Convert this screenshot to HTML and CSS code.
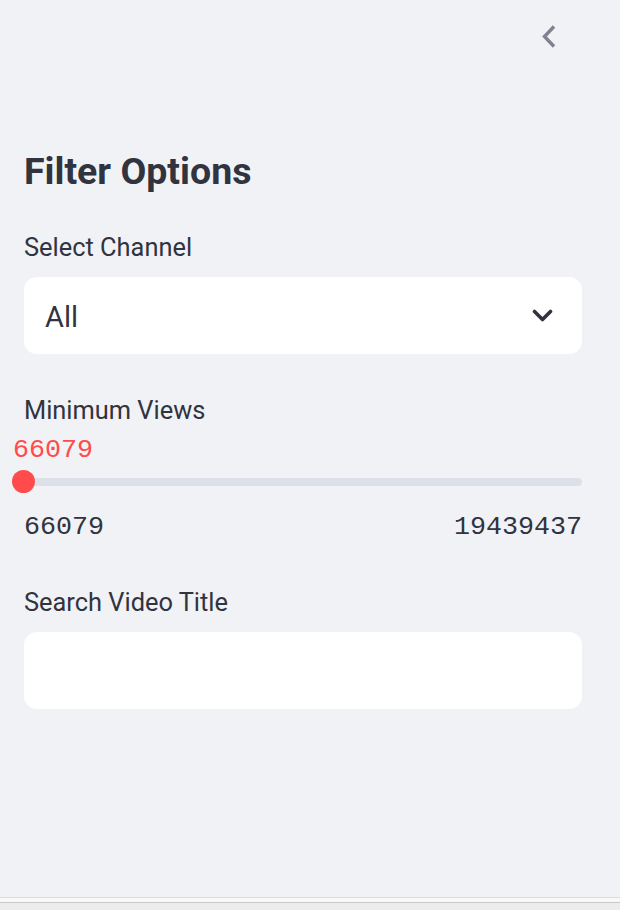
FILE: index.html
```html
<!DOCTYPE html>
<html lang="en">
<head>
<meta charset="utf-8">
<title>Filter Options</title>
<link rel="stylesheet" href="styles.css">
</head>
<body>
<div class="page">
  <aside class="sidebar">
    <div class="topbar">
      <button class="collapse" aria-label="Collapse sidebar">
        <svg width="16" height="25" viewBox="0 0 16 25" aria-hidden="true"><path d="M13 2.5 L3.5 12.5 L13 22.5" fill="none" stroke="#808290" stroke-width="3.4" stroke-linecap="butt" stroke-linejoin="miter"/></svg>
      </button>
    </div>
    <h2 class="heading">Filter Options</h2>

    <div class="widget w-select">
      <div class="label">Select Channel</div>
      <div class="select">
        <span class="select-value">All</span>
        <svg class="select-arrow" width="21" height="14" viewBox="0 0 21 14" aria-hidden="true"><path d="M2.5 2.5 L10.5 10.5 L18.5 2.5" fill="none" stroke="#31333f" stroke-width="3.6" stroke-linecap="round" stroke-linejoin="round"/></svg>
      </div>
    </div>

    <div class="widget w-slider">
      <div class="label">Minimum Views</div>
      <div class="slider-value">66079</div>
      <div class="slider">
        <div class="track"></div>
        <div class="thumb"></div>
      </div>
      <div class="range">
        <span>66079</span>
        <span>19439437</span>
      </div>
    </div>

    <div class="widget w-input">
      <div class="label">Search Video Title</div>
      <div class="input"></div>
    </div>
  </aside>
  <div class="hscroll"></div>
</div>
</body>
</html>
```

FILE: styles.css
```css
html, body {
  margin: 0;
  padding: 0;
}

body {
  background: #f0f2f6;
  font-family: Roboto, "Liberation Sans", sans-serif;
  color: #31333f;
}

.page {
  height: 910px;
  display: flex;
  flex-direction: column;
  overflow: hidden;
}

.sidebar {
  flex: 1;
  background: #f0f2f6;
  padding: 0 38px 0 24px;
  border-bottom: 1px solid #dcdcdf;
}

.topbar {
  height: 48px;
  display: flex;
  justify-content: flex-end;
  align-items: flex-start;
  padding-top: 24px;
  box-sizing: border-box;
  padding-right: 25px;
}

.collapse {
  border: 0;
  background: none;
  padding: 0;
  margin: 0;
  width: 16px;
  height: 25px;
  display: block;
}

.collapse svg {
  display: block;
}

.heading {
  margin: 101px 0 0 0;
  font-size: 37.5px;
  line-height: 44px;
  font-weight: 700;
  letter-spacing: 0;
  color: #31333f;
}

.label {
  font-size: 25.4px;
  line-height: 32px;
  font-weight: 400;
  color: #31333f;
}

.w-select {
  margin-top: 38px;
}

.select {
  margin-top: 14px;
  height: 77px;
  background: #ffffff;
  border-radius: 13px;
  display: flex;
  align-items: center;
  justify-content: space-between;
  padding: 2px 29px 0 21px;
  box-sizing: border-box;
}

.select-value {
  font-size: 29px;
  line-height: 34px;
}

.select-arrow {
  display: block;
  margin-top: -2px;
}

.w-slider {
  margin-top: 40px;
}

.slider-value {
  font-family: "Liberation Mono", "DejaVu Sans Mono", monospace;
  font-size: 26.7px;
  line-height: 30px;
  color: #ff4b4b;
  margin-top: 9px;
  margin-left: -11px;
}

.slider {
  position: relative;
  height: 23px;
  margin-top: 5px;
  display: flex;
  align-items: center;
}

.track {
  flex: 1;
  height: 8px;
  border-radius: 4px;
  background: #dce0e9;
}

.thumb {
  position: absolute;
  left: -12px;
  top: 0;
  width: 23px;
  height: 23px;
  border-radius: 50%;
  background: #ff4b4b;
}

.range {
  display: flex;
  justify-content: space-between;
  font-family: "Liberation Mono", "DejaVu Sans Mono", monospace;
  font-size: 26.7px;
  line-height: 30px;
  color: #31333f;
  margin-top: 19px;
}

.w-input {
  margin-top: 44px;
}

.input {
  margin-top: 14px;
  height: 77px;
  background: #ffffff;
  border-radius: 13px;
}

.hscroll {
  height: 12px;
  flex: none;
  background: #ececec;
  border-top: 4px solid #f8f8f8;
  box-sizing: border-box;
  box-shadow: inset 0 1px 0 #c9c9c9;
}
```
